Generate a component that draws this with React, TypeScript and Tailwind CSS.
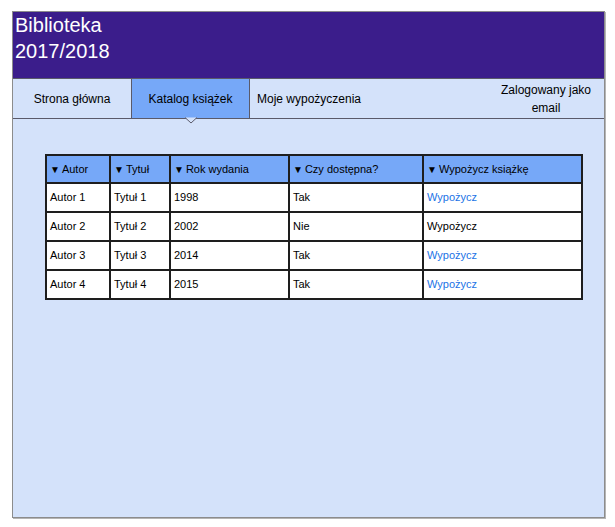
const columns = [
  { label: 'Autor', width: 'w-[64px]' },
  { label: 'Tytuł', width: 'w-[60px]' },
  { label: 'Rok wydania', width: 'w-[119px]' },
  { label: 'Czy dostępna?', width: 'w-[134px]' },
  { label: 'Wypożycz książkę', width: 'w-[159px]' },
]

const books = [
  { author: 'Autor 1', title: 'Tytuł 1', year: '1998', available: true },
  { author: 'Autor 2', title: 'Tytuł 2', year: '2002', available: false },
  { author: 'Autor 3', title: 'Tytuł 3', year: '2014', available: true },
  { author: 'Autor 4', title: 'Tytuł 4', year: '2015', available: true },
]

const tabs = [
  { name: 'Strona główna', active: false },
  { name: 'Katalog książek', active: true },
  { name: 'Moje wypożyczenia', active: false },
]

export default function App() {
  return (
    <div className="min-h-screen bg-white pl-[12px] pt-[11px] font-['Liberation_Sans',Arial,sans-serif]">
      <div className="flex h-[507px] w-[593px] flex-col border border-[#8c8c8c] bg-[#d4e2fa] shadow-[1px_1px_0_#b5b5b5]">
        {/* Header */}
        <div className="h-[66px] bg-[#3b1d8b] pl-[2px] text-[20px] leading-[26px] text-white">
          <div>Biblioteka</div>
          <div>2017/2018</div>
        </div>

        {/* Navigation */}
        <nav className="flex h-[41px] border-y border-[#5a5a6a] text-[12px] text-black">
          {tabs.map((tab) => (
            <div
              key={tab.name}
              className={
                tab.active
                  ? 'relative flex w-[119px] items-center justify-center border-x border-[#5a5a6a] bg-[#76a8f8]'
                  : 'flex w-[118px] items-center justify-center'
              }
            >
              {tab.name}
              {tab.active && (
                <svg
                  className="absolute left-1/2 top-full -ml-[6px] -mt-px"
                  width="12"
                  height="7"
                  viewBox="0 0 12 7"
                >
                  <path d="M0 0.5 L6 6 L12 0.5" fill="#d4e2fa" stroke="#5a5a6a" />
                </svg>
              )}
            </div>
          ))}
          <div className="ml-auto mr-[6px] flex w-[104px] flex-col items-center justify-center text-center leading-[18px]">
            <span>Zalogowany jako</span>
            <span>email</span>
          </div>
        </nav>

        {/* Katalog */}
        <div className="pl-[32px] pt-[35px]">
          <table className="table-fixed border-collapse border-2 border-[#1e1e1e] text-[11px] text-black">
            <thead>
              <tr className="h-[28px] bg-[#76a8f8]">
                {columns.map((col) => (
                  <th
                    key={col.label}
                    className={`${col.width} border-2 border-[#1e1e1e] px-[3px] text-left font-normal`}
                  >
                    <span className="mr-[2px] text-[10px]">▼</span>
                    {col.label}
                  </th>
                ))}
              </tr>
            </thead>
            <tbody>
              {books.map((book) => (
                <tr key={book.author} className="h-[29px] bg-white">
                  <td className="border-2 border-[#1e1e1e] px-[3px]">{book.author}</td>
                  <td className="border-2 border-[#1e1e1e] px-[3px]">{book.title}</td>
                  <td className="border-2 border-[#1e1e1e] px-[3px]">{book.year}</td>
                  <td className="border-2 border-[#1e1e1e] px-[3px]">{book.available ? 'Tak' : 'Nie'}</td>
                  <td
                    className={
                      book.available
                        ? 'border-2 border-[#1e1e1e] px-[3px] text-[#1c73e6]'
                        : 'border-2 border-[#1e1e1e] px-[3px]'
                    }
                  >
                    Wypożycz
                  </td>
                </tr>
              ))}
            </tbody>
          </table>
        </div>
      </div>
    </div>
  )
}
